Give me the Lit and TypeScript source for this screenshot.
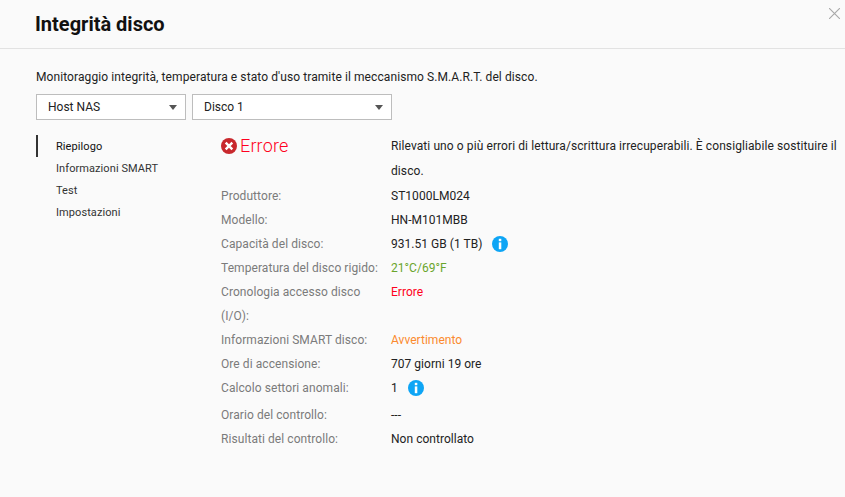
import { LitElement, html, css } from "lit";
import { customElement } from "lit/decorators.js";

const infoIcon = html`<svg class="info" width="16" height="16" viewBox="0 0 16 16">
  <circle cx="8" cy="8" r="8" fill="#0ea5f5"></circle>
  <rect x="6.8" y="2.8" width="2.5" height="2.4" fill="#fff"></rect>
  <rect x="6.8" y="6.4" width="2.5" height="6.8" fill="#fff"></rect>
</svg>`;

const caret = html`<svg class="caret" width="8" height="5" viewBox="0 0 8 5">
  <path d="M0 0h8L4 5z" fill="#555"></path>
</svg>`;

@customElement("app-root")
export class AppRoot extends LitElement {
  static styles = css`
    :host {
      display: block;
      width: 845px;
      height: 497px;
      overflow: hidden;
      position: relative;
      background: #fafafa;
      font-family: Roboto, sans-serif;
      font-size: 12px;
      color: #222;
    }

    .header {
      height: 49px;
      box-sizing: border-box;
      border-bottom: 1px solid #e2e2e2;
      padding-left: 35px;
      font-size: 20px;
      font-weight: 700;
      line-height: 48px;
      color: #111;
    }

    .close {
      position: absolute;
      top: 8px;
      right: 5px;
    }

    .body {
      padding: 20px 0 0 36px;
    }

    .intro {
      line-height: 16px;
      margin-bottom: 9px;
      letter-spacing: 0.09px;
    }

    .selects {
      display: flex;
      gap: 6px;
      margin-bottom: 15px;
    }

    .select {
      display: flex;
      align-items: center;
      justify-content: space-between;
      box-sizing: border-box;
      height: 26px;
      width: 150px;
      padding: 0 8px 0 11px;
      border: 1px solid #bdbdbd;
      background: #fff;
    }

    .select.wide {
      width: 200px;
    }

    .columns {
      display: flex;
    }

    .nav {
      width: 185px;
      flex: none;
    }

    .nav div {
      height: 22px;
      line-height: 24px;
      padding-left: 20px;
      font-size: 11px;
      letter-spacing: 0.08px;
      color: #333;
    }

    .nav .active {
      border-left: 2px solid #333;
      padding-left: 18px;
      color: #111;
    }

    .detail {
      width: 620px;
      flex: none;
    }

    .status {
      display: grid;
      grid-template-columns: 170px 1fr;
    }

    .status-title {
      display: flex;
      align-items: flex-start;
      gap: 3px;
      font-size: 18px;
      font-weight: 300;
      letter-spacing: 0.15px;
      line-height: 22px;
      color: #ff0020;
    }

    .status-title svg {
      margin-top: 3px;
    }

    .status-text {
      line-height: 25px;
      margin-top: -1px;
      width: 450px;
      letter-spacing: 0.09px;
    }

    .row {
      display: grid;
      grid-template-columns: 170px 1fr;
      line-height: 24px;
    }

    .row.tall {
      padding-bottom: 3px;
    }

    .label {
      padding-right: 10px;
      letter-spacing: 0.07px;
      color: #7b7b7b;
    }

    .value {
      display: flex;
      align-items: center;
      gap: 10px;
      letter-spacing: 0.03px;
    }

    .value.top {
      align-items: flex-start;
    }

    .info {
      flex: none;
    }

    .green {
      color: #6aa52c;
    }

    .red {
      color: #ff0020;
    }

    .orange {
      color: #fb8a2e;
    }
  `;

  render() {
    return html`
      <div class="header">Integrità disco</div>
      <svg class="close" width="11" height="11" viewBox="0 0 11 11">
        <path d="M0 0l11 11M11 0L0 11" stroke="#a8a8a8" stroke-width="1.1" fill="none"></path>
      </svg>
      <div class="body">
        <div class="intro">
          Monitoraggio integrità, temperatura e stato d'uso tramite il meccanismo S.M.A.R.T. del disco.
        </div>
        <div class="selects">
          <div class="select"><span>Host NAS</span>${caret}</div>
          <div class="select wide"><span>Disco 1</span>${caret}</div>
        </div>
        <div class="columns">
          <div class="nav">
            <div class="active">Riepilogo</div>
            <div>Informazioni SMART</div>
            <div>Test</div>
            <div>Impostazioni</div>
          </div>
          <div class="detail">
            <div class="status">
              <div class="status-title">
                <svg width="16" height="16" viewBox="0 0 16 16">
                  <circle cx="8" cy="8" r="8" fill="#c8282d"></circle>
                  <path d="M4.7 4.7l6.6 6.6M11.3 4.7l-6.6 6.6" stroke="#fff" stroke-width="2.4" fill="none"></path>
                </svg>
                Errore
              </div>
              <div class="status-text">
                Rilevati uno o più errori di lettura/scrittura irrecuperabili. È consigliabile sostituire il disco.
              </div>
            </div>
            <div class="row"><div class="label">Produttore:</div><div class="value">ST1000LM024</div></div>
            <div class="row"><div class="label">Modello:</div><div class="value">HN-M101MBB</div></div>
            <div class="row"><div class="label">Capacità del disco:</div><div class="value">931.51 GB (1 TB) ${infoIcon}</div></div>
            <div class="row"><div class="label">Temperatura del disco rigido:</div><div class="value green">21°C/69°F</div></div>
            <div class="row">
              <div class="label">Cronologia accesso disco (I/O):</div>
              <div class="value red top">Errore</div>
            </div>
            <div class="row"><div class="label">Informazioni SMART disco:</div><div class="value orange">Avvertimento</div></div>
            <div class="row"><div class="label">Ore di accensione:</div><div class="value">707 giorni 19 ore</div></div>
            <div class="row tall"><div class="label">Calcolo settori anomali:</div><div class="value">1 ${infoIcon}</div></div>
            <div class="row"><div class="label">Orario del controllo:</div><div class="value">---</div></div>
            <div class="row"><div class="label">Risultati del controllo:</div><div class="value">Non controllato</div></div>
          </div>
        </div>
      </div>
    `;
  }
}

declare global {
  interface HTMLElementTagNameMap {
    "app-root": AppRoot;
  }
}
